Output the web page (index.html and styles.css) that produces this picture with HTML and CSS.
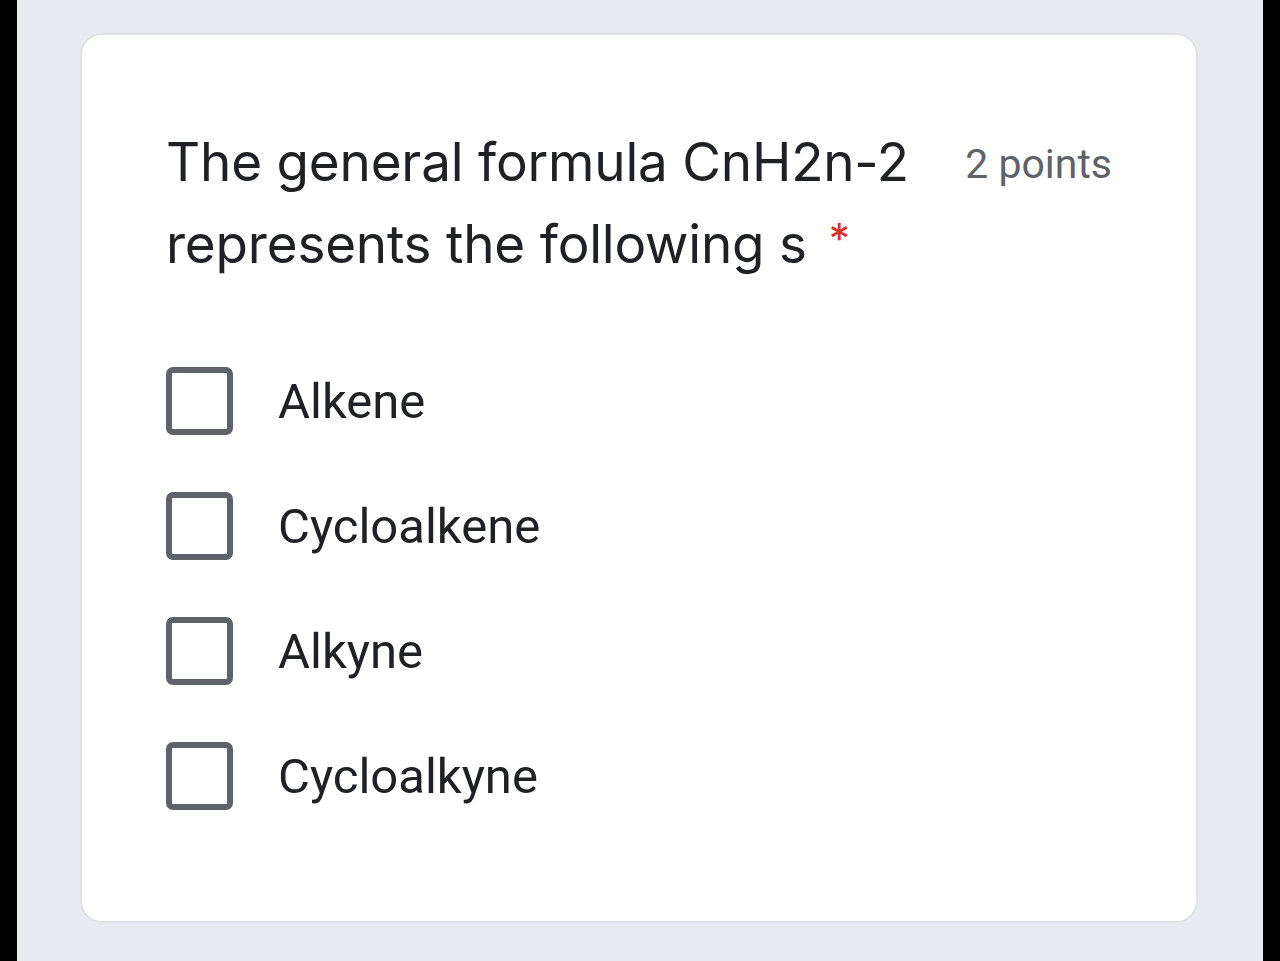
FILE: index.html
```html
<!DOCTYPE html>
<html lang="en">
<head>
<meta charset="utf-8">
<title>Question</title>
<link rel="stylesheet" href="styles.css">
</head>
<body>
<div class="screen">
  <div class="card">
    <div class="header">
      <div class="title"><span class="q">The general formula CnH2n-2</span> <span class="q">represents the following s</span><span class="req">*</span></div>
      <div class="points">2 points</div>
    </div>
    <div class="options">
      <label class="option"><span class="box"></span><span class="label">Alkene</span></label>
      <label class="option"><span class="box"></span><span class="label">Cycloalkene</span></label>
      <label class="option"><span class="box"></span><span class="label">Alkyne</span></label>
      <label class="option"><span class="box"></span><span class="label">Cycloalkyne</span></label>
    </div>
  </div>
</div>
</body>
</html>
```
FILE: styles.css
```css
html, body {
  margin: 0;
  padding: 0;
  background: #000;
  height: 961px;
  overflow: hidden;
}
.screen {
  margin: 0 17px;
  height: 961px;
  background: #e9ebf1;
  padding-top: 33px;
  box-sizing: border-box;
}
.card {
  margin-left: 63px;
  width: 1118px;
  height: 890px;
  box-sizing: border-box;
  background: #fff;
  border: 2px solid #dfe1e6;
  border-radius: 22px;
  padding: 86px 84px 0 84px;
}
.header {
  display: flex;
  align-items: baseline;
  justify-content: space-between;
}
.title {
  font-family: Inter, "Noto Sans", sans-serif;
  font-size: 53px;
  line-height: 82px;
  color: #202124;
  width: 780px;
  letter-spacing: -0.2px;
}
.q {
  white-space: nowrap;
}
.req {
  display: inline-block;
  color: #d93025;
  font-size: 42px;
  line-height: 1;
  vertical-align: 9px;
  margin-left: 22px;
}
.points {
  font-family: Roboto, "Liberation Sans", sans-serif;
  font-size: 41px;
  color: #5f6368;
  white-space: nowrap;
  position: relative;
  top: -3px;
}
.options {
  margin-top: 82px;
  display: flex;
  flex-direction: column;
  gap: 57px;
}
.option {
  display: flex;
  align-items: center;
  gap: 45px;
  height: 68px;
}
.box {
  width: 67px;
  height: 68px;
  box-sizing: border-box;
  border: 6px solid #5f6368;
  border-radius: 7px;
  flex: none;
}
.label {
  font-family: Roboto, "Liberation Sans", sans-serif;
  font-size: 49px;
  color: #202124;
}
```
